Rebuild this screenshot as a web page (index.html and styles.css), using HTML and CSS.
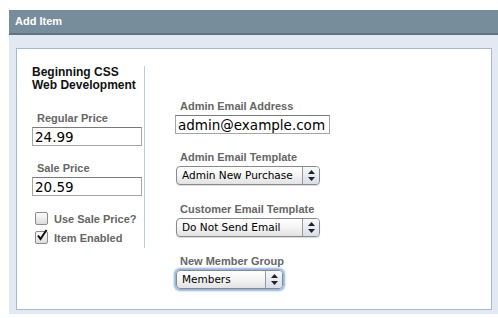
FILE: index.html
```html
<!DOCTYPE html>
<html lang="en">
<head>
    <meta charset="UTF-8">
    <title>Add Item</title>
    <link rel="stylesheet" href="styles.css">
</head>
<body>
    <div class="panel">
        <h1 class="panel-title">Add Item</h1>
        <div class="panel-body">
            <div class="form-box">
                <div class="col-left">
                    <h2 class="item-name">Beginning CSS Web Development</h2>

                    <label class="field-label">Regular Price</label>
                    <input class="text-input price-input" type="text" value="24.99">

                    <label class="field-label">Sale Price</label>
                    <input class="text-input price-input" type="text" value="20.59">

                    <div class="checks">
                        <div class="check-row">
                            <span class="checkbox"></span>
                            <span class="check-label">Use Sale Price?</span>
                        </div>
                        <div class="check-row">
                            <span class="checkbox">
                                <svg width="14" height="13" viewBox="0 0 14 13"><path d="M3 6.5 L5.5 10 L11.5 1" fill="none" stroke="#111" stroke-width="2"/></svg>
                            </span>
                            <span class="check-label">Item Enabled</span>
                        </div>
                    </div>
                </div>

                <div class="col-right">
                    <label class="field-label">Admin Email Address</label>
                    <input class="text-input email-input" type="text" value="admin@example.com">

                    <label class="field-label">Admin Email Template</label>
                    <div class="select wide">
                        <span class="select-value">Admin New Purchase</span>
                        <span class="select-arrows"><svg width="7" height="11" viewBox="0 0 7 11"><path d="M3.5 0 L7 4 L0 4 Z M0 7 L7 7 L3.5 11 Z" fill="#222"/></svg></span>
                    </div>

                    <label class="field-label">Customer Email Template</label>
                    <div class="select wide">
                        <span class="select-value">Do Not Send Email</span>
                        <span class="select-arrows"><svg width="7" height="11" viewBox="0 0 7 11"><path d="M3.5 0 L7 4 L0 4 Z M0 7 L7 7 L3.5 11 Z" fill="#222"/></svg></span>
                    </div>

                    <label class="field-label">New Member Group</label>
                    <div class="select narrow focused">
                        <span class="select-value">Members</span>
                        <span class="select-arrows"><svg width="7" height="11" viewBox="0 0 7 11"><path d="M3.5 0 L7 4 L0 4 Z M0 7 L7 7 L3.5 11 Z" fill="#222"/></svg></span>
                    </div>
                </div>
            </div>
        </div>
    </div>
</body>
</html>
```

FILE: styles.css
```css
body {
    margin: 0;
    padding: 10px 0 0 9px;
    overflow: hidden;
    background-color: #fff;
    font-family: "Liberation Sans", Arial, sans-serif;
}
.panel {
    width: 490px;
}
.panel-title {
    margin: 0;
    height: 23px;
    line-height: 22px;
    padding-left: 6px;
    font-size: 11px;
    font-weight: bold;
    color: #fff;
    background-color: #778d9b;
    border-bottom: 2px solid #5f7482;
}
.panel-body {
    background-color: #e3e9f2;
    padding: 13px 7px 4px 7px;
}
.form-box {
    background-color: #fff;
    border: 1px solid #a9b9d0;
    height: 262px;
    display: flex;
    padding: 17px 0 0 15px;
    box-sizing: border-box;
}
.col-left {
    width: 112px;
    height: 182px;
    border-right: 1px solid #bccbe1;
    display: flex;
    flex-direction: column;
    align-items: flex-start;
}
.item-name {
    margin: 0 0 20px 0;
    font-size: 12px;
    line-height: 13px;
    font-weight: bold;
    color: #111;
}
.field-label {
    display: block;
    font-size: 11px;
    font-weight: bold;
    line-height: 13px;
    color: #666;
    margin: 0 0 2px 5px;
}
.text-input {
    display: block;
    box-sizing: border-box;
    height: 19px;
    padding: 0 2px;
    border: 1px solid #a6a6a6;
    border-top-color: #7a7a7a;
    font-family: "DejaVu Sans", sans-serif;
    font-size: 13.5px;
    color: #000;
    outline: none;
}
.price-input {
    width: 110px;
    margin-bottom: 16px;
}
.checks {
    display: flex;
    flex-direction: column;
    gap: 6px;
    margin: 0 0 0 3px;
}
.check-row {
    display: flex;
    align-items: center;
    gap: 6px;
    height: 13px;
}
.checkbox {
    width: 11px;
    height: 11px;
    border: 1px solid #8c8c8c;
    border-radius: 2px;
    background: linear-gradient(#fdfdfd, #dcdcdc);
    position: relative;
}
.checkbox svg {
    position: absolute;
    left: -1px;
    top: -3px;
}
.check-label {
    font-size: 11px;
    font-weight: bold;
    color: #666;
}
.col-right {
    margin-left: 30px;
    padding-top: 34px;
}
.email-input {
    width: 155px;
    margin-bottom: 17px;
}
.select {
    display: flex;
    box-sizing: border-box;
    height: 19px;
    border: 1px solid #8a8a8a;
    border-radius: 4px;
    background: linear-gradient(#ffffff, #f4f4f4 50%, #e2e2e2);
    margin: 0 0 18px 1px;
    box-shadow: 0 1px 1px rgba(0,0,0,0.15);
}
.select.wide {
    width: 144px;
}
.select.narrow {
    width: 107px;
}
.select.focused {
    box-shadow: 0 0 2px 2px #8fb2dc;
}
.select-value {
    flex: 1;
    font-family: "DejaVu Sans", sans-serif;
    font-size: 10.5px;
    line-height: 17px;
    padding-left: 5px;
    color: #000;
}
.select-arrows {
    width: 16px;
    border-left: 1px solid #9a9a9a;
    display: flex;
    align-items: center;
    justify-content: center;
    background: linear-gradient(#f6f8fb, #d8dee8);
    border-radius: 0 3px 3px 0;
}
```
